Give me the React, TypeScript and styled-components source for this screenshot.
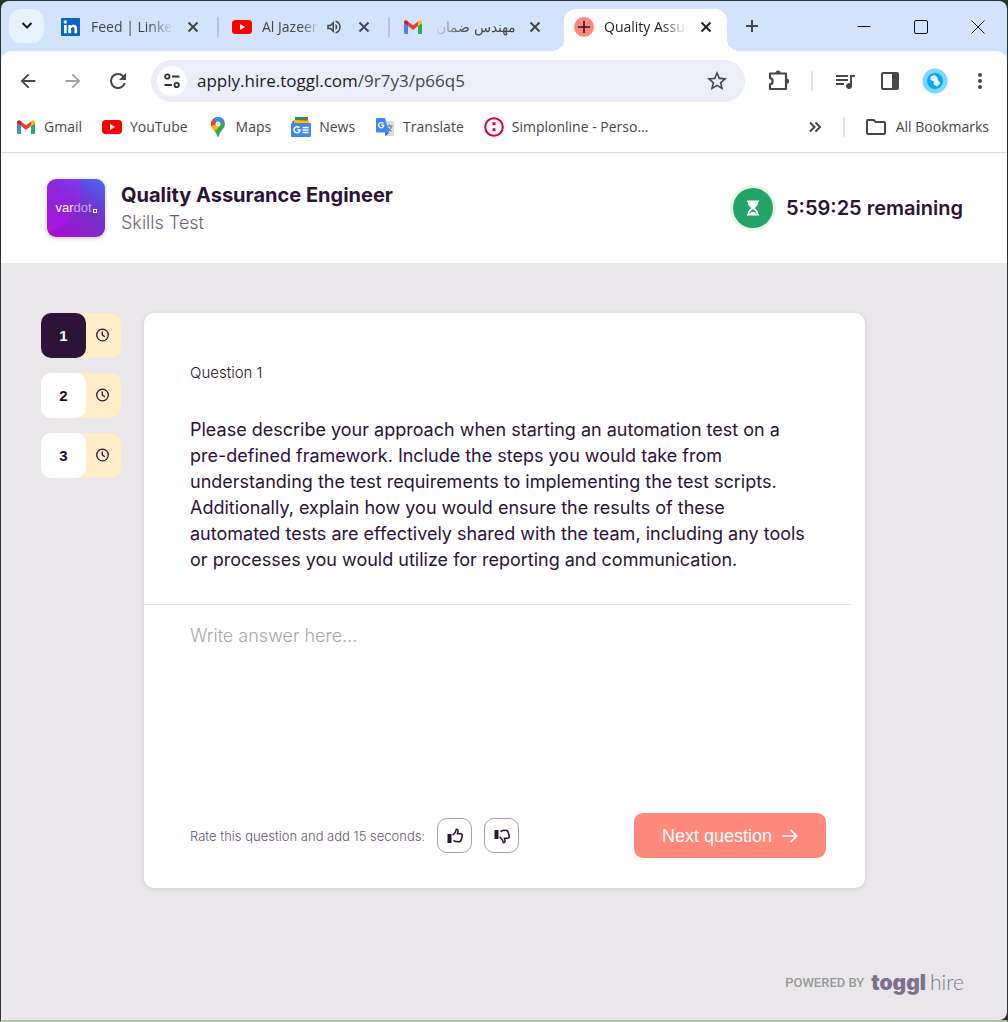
import React, { useState } from "react";
import styled, { createGlobalStyle, css } from "styled-components";

const uiFont = `"Open Sans", "Noto Sans", sans-serif`;
const pageFont = `Inter, "Liberation Sans", sans-serif`;
const ink = "#2c1338";
const chromeInk = "#474747";

const GlobalStyle = createGlobalStyle`
  *, *::before, *::after { box-sizing: border-box; }
  html, body, #root { height: 100%; }
  body { margin: 0; background: #26302a; font-family: ${pageFont}; }
  button { font: inherit; color: inherit; border: 0; padding: 0; background: none; cursor: pointer; }
  svg { display: block; flex: none; }
  h1, p { margin: 0; }
`;

const Window = styled.div`
  min-height: 100%;
  display: flex;
  flex-direction: column;
  border: 1px solid #2b352f;
  border-bottom: 2px solid #a9c4a8;
  background: #2b352f;
`;

/* ---------- tab strip ---------- */

const TabStrip = styled.div`
  display: flex;
  align-items: flex-start;
  height: 50px;
  padding: 8px 8px 0;
  background: #d3e2fd;
  border-radius: 8px 8px 0 0;
  font-family: ${uiFont};
  color: ${chromeInk};
`;

const TabSearch = styled.button`
  width: 35px;
  height: 34px;
  flex: none;
  margin-right: 7px;
  display: grid;
  place-items: center;
  border-radius: 12px;
  background: #eaf1fe;
`;

const Tabs = styled.div`
  display: flex;
  min-width: 0;
`;

const corner = css`
  content: "";
  position: absolute;
  bottom: 0;
  width: 12px;
  height: 12px;
`;

const Tab = styled.div<{ $active?: boolean; $divided?: boolean }>`
  position: relative;
  width: 163px;
  margin-right: 8px;
  height: 42px;
  padding: 0 12px 6px 10px;
  display: flex;
  align-items: center;
  border-radius: 12px 12px 0 0;
  ${(p) => p.$active && css`
    background: #fff;
    color: #222;
    &::before { ${corner} left: -12px; background: radial-gradient(circle at 0 0, transparent 12px, #fff 12px); }
    &::after { ${corner} right: -12px; background: radial-gradient(circle at 100% 0, transparent 12px, #fff 12px); }
  `}
  ${(p) => p.$divided && css`
    &::after { content: ""; position: absolute; right: -5px; top: 8px; width: 2px; height: 20px; background: #a8c7fa; }
  `}
`;

const TabTitle = styled.span`
  flex: 1;
  min-width: 0;
  margin: 0 10px;
  overflow: hidden;
  white-space: nowrap;
  font-size: 14px;
  line-height: 22px;
  mask-image: linear-gradient(to right, #000 70%, transparent);
  &[dir="rtl"] { mask-image: linear-gradient(to left, #000 60%, transparent); }
`;

const IconButton = styled.button<{ $size?: number }>`
  width: ${(p) => p.$size ?? 18}px;
  height: ${(p) => p.$size ?? 18}px;
  flex: none;
  display: grid;
  place-items: center;
  &:disabled { opacity: 0.5; }
`;

const AudioButton = styled(IconButton)`
  margin: 0 12px 0 -4px;
`;

const WindowControls = styled.div`
  margin-left: auto;
  display: flex;
  gap: 21px;
  padding-right: 3px;
  color: #111;
`;

/* ---------- toolbar ---------- */

const ToolbarWrap = styled.div`
  background: #d3e2fd;
`;

const Toolbar = styled.div`
  display: flex;
  align-items: center;
  height: 59px;
  padding: 0 9px;
  border-radius: 10px 10px 0 0;
  background: #fff;
  color: ${chromeInk};
`;

const NavButtons = styled.div`
  display: flex;
  gap: 9px;
  margin-right: 15px;
`;

const AddressBar = styled.div`
  flex: 1;
  min-width: 0;
  height: 42px;
  display: flex;
  align-items: center;
  gap: 10px;
  padding: 0 16px 0 6px;
  border-radius: 21px;
  background: #ebeef8;
  font-family: ${uiFont};
`;

const SiteInfo = styled(IconButton)`
  border-radius: 50%;
  background: #fff;
`;

const Address = styled.span`
  flex: 1;
  font-size: 17px;
  line-height: 24px;
  color: #474747;
  white-space: nowrap;
  b { font-weight: 400; color: #1c1c1c; }
`;

const Actions = styled.div`
  display: flex;
  align-items: center;
  gap: 9px;
  margin-left: 16px;
`;

const Separator = styled.span`
  width: 2px;
  height: 20px;
  flex: none;
  background: #d3e2fd;
  ${Actions} & { margin: 0 5px; }
`;

const BookmarksBar = styled.nav`
  display: flex;
  align-items: center;
  height: 43px;
  padding: 0 18px 8px 15px;
  gap: 20px;
  border-bottom: 1px solid #dcdcdc;
  background: #fff;
  color: ${chromeInk};
  font-family: ${uiFont};
  font-size: 14px;
  line-height: 20px;
`;

const Bookmark = styled.a`
  display: flex;
  align-items: center;
  gap: 8px;
  color: inherit;
  text-decoration: none;
  white-space: nowrap;
`;

const BookmarksEnd = styled.div`
  display: flex;
  align-items: center;
  gap: 19px;
  margin-left: auto;
`;

/* ---------- page ---------- */

const Header = styled.header`
  display: flex;
  align-items: center;
  justify-content: space-between;
  height: 110px;
  padding: 0 44px 0 46px;
  background: #fff;
  color: ${ink};
`;

const Brand = styled.div`
  display: flex;
  align-items: center;
  gap: 16px;
`;

const BrandText = styled.div`
  padding-top: 2px;
`;

const VardotLogo = styled.div`
  width: 58px;
  height: 58px;
  display: flex;
  align-items: center;
  justify-content: center;
  gap: 1px;
  border-radius: 9px;
  background:
    radial-gradient(circle at -10px 10px, rgba(190, 20, 255, 0.35) 0, rgba(190, 20, 255, 0.35) 44px, transparent 45px),
    linear-gradient(35deg, #a50fd0 10%, #7230c6 55%, #4f66fa);
  box-shadow: 0 1px 4px rgba(44, 19, 56, 0.25);
  color: #fff;
  font: 400 13px/16px "Liberation Sans", sans-serif;
  span { color: #c9a3ee; }
  i { width: 4px; height: 4px; margin-top: 5px; border: 1px solid #fff; }
`;

const Title = styled.h1`
  font-size: 20px;
  line-height: 28px;
  font-weight: 700;
`;

const Subtitle = styled.p`
  font-size: 18px;
  line-height: 28px;
  font-weight: 300;
  color: #6f5f7a;
`;

const Timer = styled.div`
  display: flex;
  align-items: center;
  gap: 13px;
  font-size: 20px;
  line-height: 28px;
  font-weight: 600;
`;

const TimerBadge = styled.span`
  width: 40px;
  height: 40px;
  display: grid;
  place-items: center;
  border-radius: 50%;
  background: #24a567;
  box-shadow: 0 0 0 3px #e6f4ed;
`;

const Main = styled.main`
  flex: 1;
  display: flex;
  flex-direction: column;
  background: #e9e7ea;
  color: ${ink};
  border-radius: 0 0 8px 0;
`;

const Workspace = styled.div`
  display: flex;
  align-items: flex-start;
  gap: 23px;
  padding: 50px 142px 0 40px;
`;

const Steps = styled.nav`
  display: flex;
  flex-direction: column;
  gap: 15px;
`;

const Step = styled.button`
  display: flex;
  align-items: center;
  width: 80px;
  height: 45px;
  border-radius: 10px;
  background: #ffedc7;
`;

const StepNumber = styled.span<{ $current?: boolean }>`
  width: 45px;
  height: 45px;
  margin-right: 10px;
  display: grid;
  place-items: center;
  border-radius: 10px;
  font: 700 15px/20px "Liberation Sans", Arial, sans-serif;
  background: ${(p) => (p.$current ? ink : "#fff")};
  color: ${(p) => (p.$current ? "#fff" : "#1c0b26")};
`;

const Card = styled.section`
  flex: 1;
  min-width: 0;
  border-radius: 10px;
  background: #fff;
  box-shadow: 0 1px 5px rgba(44, 19, 56, 0.12);
`;

const Question = styled.div`
  margin-right: 14px;
  padding: 48px 36px 31px 46px;
  border-bottom: 1px solid #e4e1e6;
`;

const QuestionLabel = styled.p`
  margin-bottom: 32px;
  font-size: 15px;
  line-height: 24px;
  font-weight: 300;
`;

const QuestionText = styled.p`
  font-size: 18px;
  line-height: 26px;
`;

const Answer = styled.textarea`
  display: block;
  width: 100%;
  height: 196px;
  padding: 18px 46px;
  border: 0;
  outline: 0;
  resize: none;
  background: transparent;
  font: 400 18px/26px ${pageFont};
  color: ${ink};
  &::placeholder { color: #aaa6ad; font-weight: 300; opacity: 1; }
`;

const CardFooter = styled.div`
  display: flex;
  align-items: center;
  padding: 12px 39px 30px 46px;
`;

const RateLabel = styled.span`
  margin-right: 12px;
  font-size: 13px;
  line-height: 20px;
  font-weight: 300;
  color: #67566f;
`;

const RateButton = styled.button`
  width: 35px;
  height: 35px;
  margin-right: 12px;
  display: grid;
  place-items: center;
  border: 1px solid #a99fb0;
  border-radius: 10px;
`;

const NextButton = styled.button`
  width: 192px;
  height: 45px;
  margin-left: auto;
  display: flex;
  align-items: center;
  justify-content: center;
  gap: 10px;
  border-radius: 9px;
  background: #ff897a;
  color: #fff;
  font: 400 18px/24px "Liberation Sans", Arial, sans-serif;
`;

const PoweredBy = styled.footer`
  display: flex;
  align-items: center;
  justify-content: flex-end;
  gap: 7px;
  margin-top: auto;
  padding: 0 43px 22px;
  font: 500 13px/30px Roboto, sans-serif;
  color: #999;
`;

const TogglLogo = styled.a`
  display: flex;
  align-items: baseline;
  gap: 4px;
  color: #80718a;
  text-decoration: none;
  font: 900 21px/30px ${pageFont};
  span { font: 300 21px/30px Lato, sans-serif; }
`;

/* ---------- icons ---------- */

const Cross = () => (
  <svg width="18" height="18" viewBox="0 0 18 18" stroke="currentColor" strokeWidth="2" fill="none">
    <path d="M4.5 4.5l9 9M13.5 4.5l-9 9" />
  </svg>
);

const Material = ({ d, size = 24 }: { d: string; size?: number }) => (
  <svg width={size} height={size} viewBox="0 0 24 24" fill="currentColor">
    <path d={d} />
  </svg>
);

const LinkedIn = () => (
  <svg width="20" height="20" viewBox="0 0 20 20">
    <path fill="#0a66c2" d="M1 1h17a1 1 0 0 1 1 1v16a1 1 0 0 1-1 1H1a1 1 0 0 1-1-1V2a1 1 0 0 1 1-1z" />
    <circle cx="4.300" cy="5" r="1.700" fill="#fff" />
    <path fill="#fff" d="M3 8h2.700v8.300H3zM7.300 8h2.600v1.200c.5-.9 1.500-1.400 2.800-1.400 2.700 0 3.400 1.700 3.400 4v4.500h-2.700v-4c0-1 0-2.200-1.500-2.200s-1.800 1-1.800 2.100v4.100H7.300z" />
  </svg>
);

const YouTube = () => (
  <svg width="20" height="20" viewBox="0 0 20 20">
    <rect y="3" width="20" height="14" rx="3.500" fill="#f00" />
    <path fill="#fff" d="M8 7l5 3-5 3z" />
  </svg>
);

const Gmail = () => (
  <svg width="20" height="20" viewBox="0 0 20 20">
    <path fill="#4285f4" d="M1 6l4 3v8H2.200A1.200 1.200 0 0 1 1 15.800z" />
    <path fill="#34a853" d="M19 6l-4 3v8h2.800a1.200 1.200 0 0 0 1.200-1.200z" />
    <path fill="#ea4335" d="M5 4.500l5 3.800 5-3.800V9l-5 3.900L5 9z" />
    <path fill="#c5221f" d="M1 5.300C1 3.300 3 2.800 4.200 3.800L5 4.500V9L1 6z" />
    <path fill="#fbbc04" d="M19 5.300c0-2-2-2.500-3.200-1.500l-.8.7V9l4-3z" />
  </svg>
);

const MapPin = () => (
  <svg width="20" height="20" viewBox="0 0 20 20">
    <defs>
      <clipPath id="pin">
        <path d="M10 0a7 7 0 0 1 7 7c0 4.500-4.500 6-6.200 12.200-.3 1-1.300 1-1.600 0C7.500 13 3 11.500 3 7a7 7 0 0 1 7-7z" />
      </clipPath>
    </defs>
    <g clipPath="url(#pin)">
      <path fill="#34a853" d="M0 0h20v20H0z" />
      <path fill="#4285f4" d="M5 0h13l-2 3.500L10 7 5 2z" />
      <path fill="#ea4335" d="M5 1.500L10 7l-5 5-5-5z" />
      <path fill="#fbbc04" d="M3 10.500L10 7l1 3-6 6z" />
      <path fill="#fbbc04" d="M2 9l3-3 3 4-4 4z" />
      <path fill="#ea4335" d="M2 8.500V4l3-2.500L8.500 5 4.500 9z" />
    </g>
    <circle cx="10" cy="7" r="2.500" fill="#fff" />
  </svg>
);

const News = () => (
  <svg width="20" height="20" viewBox="0 0 20 20">
    <path fill="#0f9d58" d="M4 0h13v8H4z" />
    <path fill="#ea4335" d="M1 4l15-2.500 2 4v4H2z" />
    <path fill="#fbbc04" d="M3 3l15 .8v5H3z" />
    <rect y="6" width="20" height="14" rx="1" fill="#4285f4" />
    <path fill="none" stroke="#fff" strokeWidth="1.500" d="M8.300 10.800A3 3 0 1 0 9 13H6.300M11.500 10.500h6M11.500 13h6M11.500 15.500h6" />
  </svg>
);

const Translate = () => (
  <svg width="20" height="20" viewBox="0 0 20 20">
    <path fill="#dcdcdc" d="M7 4h11a1 1 0 0 1 1 1v13a1 1 0 0 1-1 1h-7z" />
    <path stroke="#607988" strokeWidth="1.100" fill="none" d="M11.500 9h6M14.500 7.500V9M16.500 9c-.5 2.500-2 4.200-4.300 5.200M12.700 10.500c.7 1.700 2 3 3.700 3.800" />
    <path fill="#4285f4" d="M2 1h8l4 14.500H2a1 1 0 0 1-1-1V2a1 1 0 0 1 1-1z" />
    <path fill="#2a56c6" d="M10 15.500h4l-3.500 3.800z" />
    <path fill="none" stroke="#fff" strokeWidth="1.200" d="M8.200 6.500A2.600 2.600 0 1 0 8.800 8.200H6.300" />
  </svg>
);

const Simplon = () => (
  <svg width="20" height="20" viewBox="0 0 20 20" fill="#d5003c">
    <circle cx="10" cy="10" r="8.800" fill="none" stroke="#d5003c" strokeWidth="2" />
    <path d="M8.500 5.300h3v3h-3zM8.500 11.300h3v3h-3z" />
  </svg>
);

const TogglFavicon = () => (
  <svg width="20" height="20" viewBox="0 0 20 20">
    <circle cx="10" cy="10" r="10" fill="#ff897a" />
    <path stroke={ink} strokeWidth="1.600" d="M10 4v12M4 10h12" />
  </svg>
);

const Clock = () => (
  <svg width="14" height="15" viewBox="0 0 14 15" fill="none" stroke={ink} strokeWidth="1.300">
    <circle cx="6.500" cy="7" r="5.800" />
    <path d="M6.300 3.500V7l2.500 1.800" />
  </svg>
);

const ThumbUp = () => (
  <svg width="16" height="16" viewBox="0 0 16 16">
    <path fill={ink} d="M.5 6h4v9h-4z" />
    <path fill="none" stroke={ink} strokeWidth="1.500" strokeLinejoin="round" d="M5.700 7.200L8.500 4l.6-2.200c.3-.8 2-.5 2 .9 0 1.300-.4 1.900-.8 3h3.500c1.200 0 1.700 1 1.200 1.900.3.700.1 1.500-.3 1.900.1.800-.1 1.500-.6 1.900 0 1.800-1 2.400-2.500 2.400-2.800 0-3.700-.4-5.200-1.300" />
  </svg>
);

const ThumbDown = () => (
  <svg width="16" height="16" viewBox="0 0 16 16">
    <path fill={ink} d="M.5 2h4v9h-4z" />
    <path fill="none" stroke={ink} strokeWidth="1.500" strokeLinejoin="round" d="M5.700 8.800L8.500 12l.6 2.200c.3.800 2 .5 2-.9 0-1.300-.4-1.900-.8-3h3.500c1.200 0 1.700-1 1.200-1.900.3-.7.100-1.500-.3-1.900.1-.8-.1-1.500-.6-1.900 0-1.800-1-2.400-2.500-2.400-2.800 0-3.700.4-5.200 1.300" />
  </svg>
);

const Hourglass = () => (
  <svg width="12" height="16" viewBox="0 0 12 16">
    <path fill="#fff" d="M0 .5h12V2h-.8c0 3-1.400 4.500-3.500 6 2.100 1.500 3.500 3 3.500 6h.8v1.500H0V14h.8c0-3 1.400-4.500 3.500-6C2.200 6.500.8 5 .8 2H0z" />
    <path fill="#24a567" d="M2.300 14c.2-2.200 1.700-3.400 3.700-5 2 1.600 3.500 2.800 3.700 5-1.200-1.400-2.300-2-3.700-2s-2.500.6-3.700 2z" />
  </svg>
);

const paths = {
  back: "M20 11H7.830l5.590-5.590L12 4l-8 8 8 8 1.410-1.410L7.830 13H20z",
  forward: "M12 4l-1.410 1.410L16.170 11H4v2h12.170l-5.580 5.590L12 20l8-8z",
  reload: "M17.650 6.350A7.958 7.958 0 0 0 12 4a8 8 0 1 0 7.730 10h-2.080A6 6 0 1 1 12 6c1.660 0 3.140.69 4.220 1.780L13 11h7V4z",
  star: "M22 9.240l-7.190-.62L12 2 9.190 8.630 2 9.240l5.460 4.730L5.820 21 12 17.270 18.180 21l-1.630-7.030zM12 15.400l-3.760 2.270 1-4.280-3.320-2.880 4.380-.38L12 6.100l1.710 4.040 4.380.38-3.320 2.880 1 4.280z",
  queue: "M15 6H3v2h12zm0 4H3v2h12zM3 16h8v-2H3zM17 6v8.180A3 3 0 1 0 19 17V8h3V6z",
  speaker: "M3 9v6h4l5 5V4L7 9zm7-.17v6.340L7.830 13H5v-2h2.830zM16.500 12A4.500 4.500 0 0 0 14 7.970v8.050A4.500 4.500 0 0 0 16.500 12zM14 3.230v2.060a7 7 0 0 1 0 13.420v2.060a9 9 0 0 0 0-17.540z",
  dots: "M12 8a2 2 0 1 0 0-4 2 2 0 0 0 0 4zm0 2a2 2 0 1 0 0 4 2 2 0 0 0 0-4zm0 6a2 2 0 1 0 0 4 2 2 0 0 0 0-4z",
  folder: "M9.170 6l2 2H20v10H4V6zM10 4H4a2 2 0 0 0-2 2v12a2 2 0 0 0 2 2h16a2 2 0 0 0 2-2V8a2 2 0 0 0-2-2h-8z",
};

const bookmarks = [
  { label: "Gmail", icon: <Gmail /> },
  { label: "YouTube", icon: <YouTube /> },
  { label: "Maps", icon: <MapPin /> },
  { label: "News", icon: <News /> },
  { label: "Translate", icon: <Translate /> },
  { label: "Simplonline - Perso...", icon: <Simplon /> },
];

export default function App() {
  const [current, setCurrent] = useState(1);
  return (
    <>
      <GlobalStyle />
      <Window>
        <TabStrip>
          <TabSearch aria-label="Search tabs">
            <svg width="12" height="12" viewBox="0 0 12 12" fill="none" stroke="#1c1c1c" strokeWidth="2"><path d="M1.500 3L6 7.500 10.500 3" /></svg>
          </TabSearch>
          <Tabs>
            <Tab $divided>
              <LinkedIn />
              <TabTitle>Feed | LinkedIn</TabTitle>
              <IconButton aria-label="Close tab"><Cross /></IconButton>
            </Tab>
            <Tab $divided>
              <YouTube />
              <TabTitle>Al Jazeera</TabTitle>
              <AudioButton aria-label="Mute tab"><Material d={paths.speaker} size={18} /></AudioButton>
              <IconButton aria-label="Close tab"><Cross /></IconButton>
            </Tab>
            <Tab>
              <Gmail />
              <TabTitle dir="rtl">مهندس ضمان الجودة</TabTitle>
              <IconButton aria-label="Close tab"><Cross /></IconButton>
            </Tab>
            <Tab $active>
              <TogglFavicon />
              <TabTitle>Quality Assurance</TabTitle>
              <IconButton aria-label="Close tab"><Cross /></IconButton>
            </Tab>
          </Tabs>
          <IconButton $size={34} aria-label="New tab">
            <svg width="14" height="14" viewBox="0 0 14 14" stroke="currentColor" strokeWidth="2"><path d="M7 1v12M1 7h12" /></svg>
          </IconButton>
          <WindowControls>
            <IconButton $size={36} aria-label="Minimize"><svg width="14" height="14" viewBox="0 0 14 14" stroke="currentColor"><path d="M.5 6.500h13" /></svg></IconButton>
            <IconButton $size={36} aria-label="Maximize"><svg width="14" height="14" viewBox="0 0 14 14" stroke="currentColor" fill="none"><rect x=".5" y=".5" width="13" height="13" rx="1.500" /></svg></IconButton>
            <IconButton $size={36} aria-label="Close"><svg width="14" height="14" viewBox="0 0 14 14" stroke="currentColor"><path d="M.5.5l13 13M13.500.5l-13 13" /></svg></IconButton>
          </WindowControls>
        </TabStrip>

        <ToolbarWrap>
          <Toolbar>
            <NavButtons>
              <IconButton $size={36} aria-label="Back"><Material d={paths.back} size={22} /></IconButton>
              <IconButton $size={36} aria-label="Forward" disabled><Material d={paths.forward} size={22} /></IconButton>
              <IconButton $size={36} aria-label="Reload"><Material d={paths.reload} size={24} /></IconButton>
            </NavButtons>
            <AddressBar>
              <SiteInfo $size={30} aria-label="Site information">
                <svg width="16" height="16" viewBox="0 0 16 16" fill="none" stroke="#333" strokeWidth="1.800">
                  <circle cx="3.300" cy="3.500" r="2.200" /><path d="M8 3.500h7.500M.5 12H8" /><circle cx="12.700" cy="12" r="2.200" />
                </svg>
              </SiteInfo>
              <Address><b>apply.hire.toggl.com</b>/9r7y3/p66q5</Address>
              <IconButton $size={24} aria-label="Bookmark this page"><Material d={paths.star} size={24} /></IconButton>
            </AddressBar>
            <Actions>
              <IconButton $size={36} aria-label="Extensions">
                <svg width="24" height="24" viewBox="0 0 24 24" fill="none" stroke="currentColor" strokeWidth="2.200" strokeLinejoin="round">
                  <path d="M3 4.500h16V20H3v-4.600c3.500-.5 3.500-5.700 0-6.200z" />
                  <path fill="currentColor" stroke="none" d="M8.500 4a2.600 2.600 0 0 1 5.200 0zM19.500 9.500a2.600 2.600 0 0 1 0 5.200z" />
                </svg>
              </IconButton>
              <Separator />
              <IconButton $size={36} aria-label="Media controls"><Material d={paths.queue} size={24} /></IconButton>
              <IconButton $size={36} aria-label="Side panel">
                <svg width="20" height="20" viewBox="0 0 20 20"><rect x="2" y="2" width="16" height="16" rx="1" fill="none" stroke="currentColor" strokeWidth="2" /><path fill="currentColor" d="M12 2h6v16h-6z" /></svg>
              </IconButton>
              <IconButton $size={36} aria-label="Profile">
                <svg width="26" height="26" viewBox="0 0 26 26">
                  <circle cx="13" cy="13" r="12.500" fill="#7fd6ff" /><circle cx="13" cy="13" r="8" fill="#0aa5f5" />
                  <path fill="#eaf8ff" d="M8.500 8.500l4-1.500 3 2.500.5 3 2.500 2.500-3.500 3.500-3.500-2 .5-3-3.500-1.500z" />
                </svg>
              </IconButton>
              <IconButton $size={36} aria-label="Menu"><Material d={paths.dots} size={24} /></IconButton>
            </Actions>
          </Toolbar>
        </ToolbarWrap>

        <BookmarksBar aria-label="Bookmarks">
          {bookmarks.map((b) => (
            <Bookmark href="#" key={b.label}>{b.icon}{b.label}</Bookmark>
          ))}
          <BookmarksEnd>
            <IconButton aria-label="More bookmarks">
              <svg width="14" height="12" viewBox="0 0 14 12" fill="none" stroke="currentColor" strokeWidth="2"><path d="M2 1.500L6.500 6 2 10.500M7.500 1.500L12 6l-4.500 4.500" /></svg>
            </IconButton>
            <Separator />
            <Bookmark href="#"><Material d={paths.folder} size={24} />All Bookmarks</Bookmark>
          </BookmarksEnd>
        </BookmarksBar>

        <Header>
          <Brand>
            <VardotLogo><div>var<span>dot</span></div><i /></VardotLogo>
            <BrandText>
              <Title>Quality Assurance Engineer</Title>
              <Subtitle>Skills Test</Subtitle>
            </BrandText>
          </Brand>
          <Timer><TimerBadge><Hourglass /></TimerBadge>5:59:25 remaining</Timer>
        </Header>

        <Main>
          <Workspace>
            <Steps aria-label="Questions">
              {[1, 2, 3].map((n) => (
                <Step key={n} onClick={() => setCurrent(n)}>
                  <StepNumber $current={n === current}>{n}</StepNumber>
                  <Clock />
                </Step>
              ))}
            </Steps>
            <Card>
              <Question>
                <QuestionLabel>Question {current}</QuestionLabel>
                <QuestionText>
                  Please describe your approach when starting an automation test on a pre-defined framework. Include the steps you would take from understanding the test requirements to implementing the test scripts. Additionally, explain how you would ensure the results of these automated tests are effectively shared with the team, including any tools or processes you would utilize for reporting and communication.
                </QuestionText>
              </Question>
              <Answer aria-label="Your answer" placeholder="Write answer here..." />
              <CardFooter>
                <RateLabel>Rate this question and add 15 seconds:</RateLabel>
                <RateButton aria-label="Good question"><ThumbUp /></RateButton>
                <RateButton aria-label="Bad question"><ThumbDown /></RateButton>
                <NextButton>
                  Next question
                  <svg width="16" height="16" viewBox="0 0 16 16" fill="none" stroke="currentColor" strokeWidth="1.700"><path d="M0 8h14.500M8.500 1.800L14.700 8l-6.200 6.200" /></svg>
                </NextButton>
              </CardFooter>
            </Card>
          </Workspace>
          <PoweredBy>POWERED BY<TogglLogo href="#">toggl<span>hire</span></TogglLogo></PoweredBy>
        </Main>
      </Window>
    </>
  );
}
